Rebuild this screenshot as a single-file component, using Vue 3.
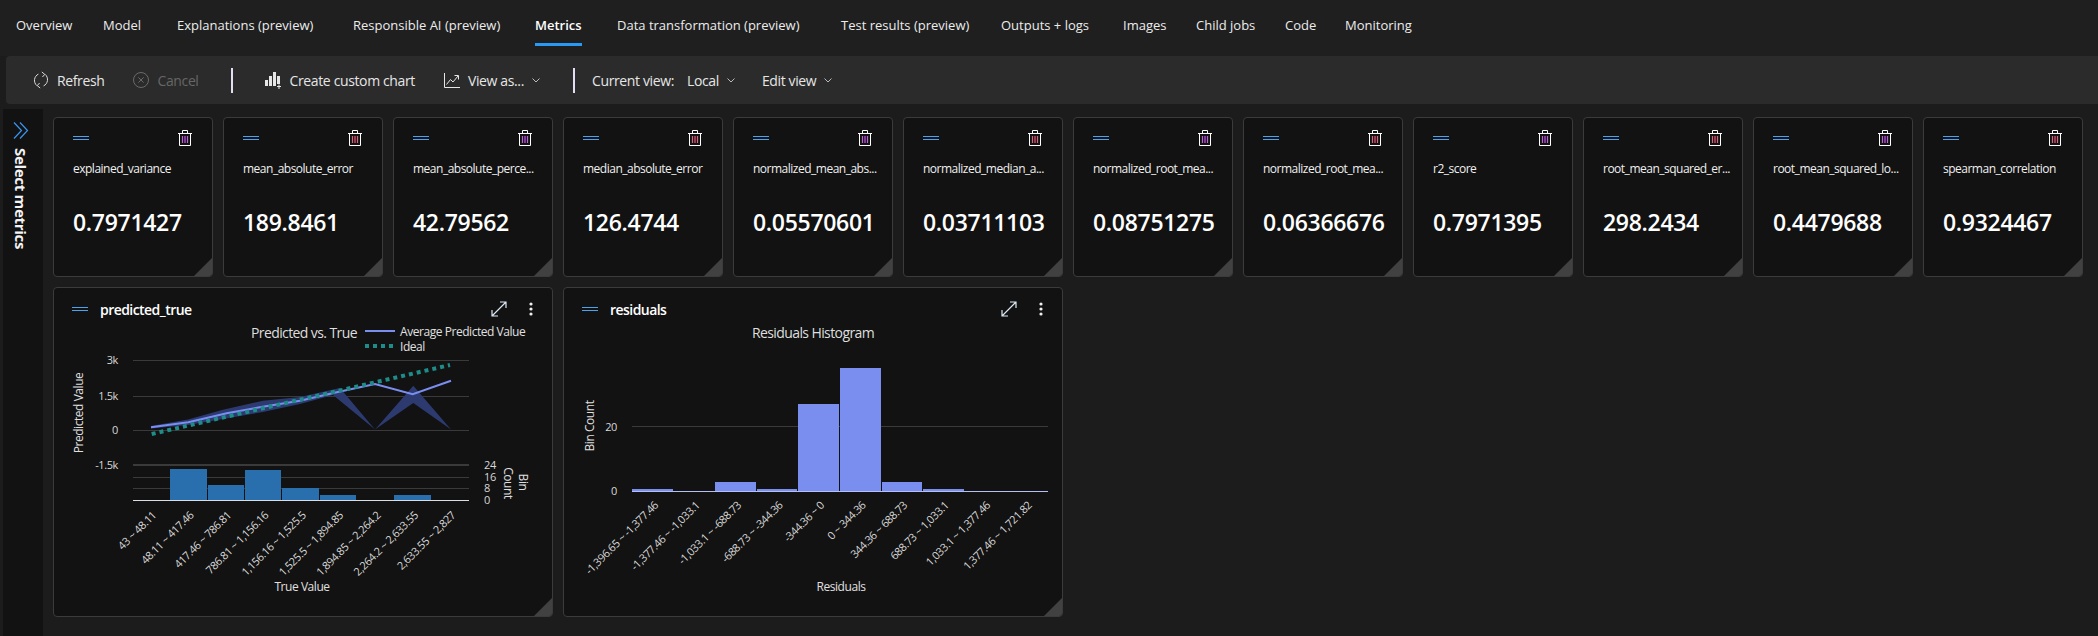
<template>
  <div class="page">
    <nav class="tabs">
      <div v-for="t in tabs" :key="t" class="tab">
        <a :class="{ active: t === 'Metrics' }">{{ t }}</a>
      </div>
    </nav>

    <div class="toolbar">
      <span class="tool refresh">
        <svg width="16" height="18" viewBox="0 0 16 18" fill="none" stroke="#dcdcdc" stroke-width="1"><path d="M5.4 3.1A7 7 0 0 0 3.8 14.6M10.6 14.9A7 7 0 0 0 12.2 3.4" /><path d="M8.8 1 11.8 3.4 9.4 6M7.2 17 4.2 14.6 6.6 12" /></svg>
        Refresh
      </span>
      <span class="tool cancel">
        <svg width="16" height="16" viewBox="0 0 16 16" fill="none" stroke="#6a6a6a" stroke-width="1"><circle cx="8" cy="8" r="7.5" /><path d="M5.4 5.4 10.6 10.6M10.6 5.4 5.4 10.6" /></svg>
        Cancel
      </span>
      <i class="sep first"></i>
      <span class="tool create">
        <svg width="17" height="17" viewBox="0 0 17 17" fill="#e6e6e6"><rect x="0" y="8" width="3" height="6" /><rect x="4" y="4" width="3" height="10" /><rect x="8" y="0" width="3" height="14" /><rect x="12" y="4" width="3" height="8" /><path d="M12 14h1.5v-1.5h1V14H16v1h-1.5v2h-1v-2H12z" /></svg>
        Create custom chart
      </span>
      <span class="tool view">
        <svg width="16" height="15" viewBox="0 0 16 15" fill="none" stroke="#e6e6e6" stroke-width="1"><path d="M.5 0V14.5H16" /><path d="M2.5 11.5 6.5 6.5 9 9 14 3M10.5 2.5H14.5V6.5" /></svg>
        View as...
        <svg class="chev" width="8" height="5" viewBox="0 0 8 5" fill="none" stroke="#bbb"><path d="M.5.5 4 4 7.5.5" /></svg>
      </span>
      <i class="sep second"></i>
      <span class="current">Current view:</span>
      <span class="tool local">Local
        <svg class="chev" width="8" height="5" viewBox="0 0 8 5" fill="none" stroke="#bbb"><path d="M.5.5 4 4 7.5.5" /></svg>
      </span>
      <span class="tool edit">Edit view
        <svg class="chev" width="8" height="5" viewBox="0 0 8 5" fill="none" stroke="#bbb"><path d="M.5.5 4 4 7.5.5" /></svg>
      </span>
    </div>

    <div class="body">
      <aside class="side">
        <svg width="16" height="17" viewBox="0 0 16 17" fill="none" stroke="#3a96f0" stroke-width="1.2"><path d="M1 .5 8.5 8.5 1 16.5M7 .5 14.5 8.5 7 16.5" /></svg>
        <span class="side-label">Select metrics</span>
      </aside>

      <main class="grid">
        <section v-for="m in metrics" :key="m.value" class="card metric">
          <div class="metric-head">
            <span class="drag"></span>
            <svg class="trash" width="14" height="16" viewBox="0 0 14 16" fill="none" stroke="#fff"><path d="M0 3.5H14M4.5 3V.5H9.5V3M1.5 3.5V15.5H12.5V3.5" /><path d="M4.5 6V13M7 6V13M9.5 6V13" :stroke="m.tint" stroke-width="1.2" /></svg>
          </div>
          <div class="metric-name">{{ m.name }}</div>
          <div class="metric-value">{{ m.value }}</div>
        </section>

        <section class="card chart">
          <div class="chart-head">
            <span class="drag"></span>
            <span class="chart-name">predicted_true</span>
            <svg class="expand" width="16" height="16" viewBox="0 0 16 16" fill="none" stroke="#dce9f5" stroke-width="1.2"><path d="M1.5 14.5 14.5 1.5M9 1H15V7M1 9V15H7" /></svg>
            <svg class="dots" width="4" height="14" viewBox="0 0 4 14" fill="#eee"><circle cx="2" cy="2" r="1.6" /><circle cx="2" cy="7" r="1.6" /><circle cx="2" cy="12" r="1.6" /></svg>
          </div>
          <svg class="plot" width="498" height="296" viewBox="54 320 498 296">
            <text class="title" x="251" y="339">Predicted vs. True</text>
            <line x1="365" y1="332" x2="395" y2="332" stroke="#7a8ef0" stroke-width="2" />
            <text class="lbl" x="400" y="336.5">Average Predicted Value</text>
            <line x1="365" y1="347" x2="395" y2="347" stroke="#1e8c88" stroke-width="4" stroke-dasharray="4 4" />
            <text class="lbl" x="400" y="351.5">Ideal</text>

            <line v-for="y in [361.5, 397.5, 431.5]" :key="y" x1="133" :y1="y" x2="469" :y2="y" stroke="#3a3a3a" />
            <line x1="133" y1="466" x2="469" y2="466" stroke="#3a3a3a" stroke-width="2" />
            <line v-for="y in [478.5, 489.5]" :key="y" x1="133" :y1="y" x2="469" :y2="y" stroke="#3a3a3a" />
            <text v-for="t in predTicks" :key="t.label" class="tick" x="118" :y="t.y" text-anchor="end">{{ t.label }}</text>
            <text class="lbl" transform="translate(83 414) rotate(-90)" text-anchor="middle">Predicted Value</text>

            <polygon points="151,427 188,420.5 223,410.7 263,401.7 300,398 340,389 375,430.5 413.3,386.7 451,430.5 413.3,404 375,430.5 333,396 300,405 263,413 223,420 188,426 151,429.5" fill="#2c3a70" />
            <polyline points="151,428.3 188.3,423.3 226.7,414.3 262.7,407.7 300,401.7 336.7,393.3 375,385 412.7,395.3 451,381.7" fill="none" stroke="#7a8ef0" stroke-width="2" />
            <line x1="151.7" y1="435" x2="450" y2="366" stroke="#1e8c88" stroke-width="4" stroke-dasharray="4 4" />

            <rect v-for="b in predBars" :key="b.x" :x="b.x" :y="b.y" :width="b.w" :height="501 - b.y" fill="#2a6fad" />
            <line x1="133" y1="501.5" x2="469" y2="501.5" stroke="#d8dde6" />
            <text v-for="t in binTicks" :key="t.label" class="tick" x="484" :y="t.y">{{ t.label }}</text>
            <text class="lbl" transform="translate(519 483) rotate(90)" text-anchor="middle">Bin</text>
            <text class="lbl" transform="translate(504 484) rotate(90)" text-anchor="middle">Count</text>
            <text v-for="(l, i) in predLabels" :key="l" class="tick" text-anchor="end" :transform="`translate(${157 + 37.4 * i} 517) rotate(-45)`">{{ l }}</text>
            <text class="lbl" x="302" y="592" text-anchor="middle">True Value</text>
          </svg>
        </section>

        <section class="card chart">
          <div class="chart-head">
            <span class="drag"></span>
            <span class="chart-name">residuals</span>
            <svg class="expand" width="16" height="16" viewBox="0 0 16 16" fill="none" stroke="#dce9f5" stroke-width="1.2"><path d="M1.5 14.5 14.5 1.5M9 1H15V7M1 9V15H7" /></svg>
            <svg class="dots" width="4" height="14" viewBox="0 0 4 14" fill="#eee"><circle cx="2" cy="2" r="1.6" /><circle cx="2" cy="7" r="1.6" /><circle cx="2" cy="12" r="1.6" /></svg>
          </div>
          <svg class="plot" width="498" height="296" viewBox="564 320 498 296">
            <text class="title" x="813" y="339" text-anchor="middle">Residuals Histogram</text>
            <line x1="632" y1="427.5" x2="1048" y2="427.5" stroke="#3a3a3a" />
            <text class="tick" x="617" y="431.5" text-anchor="end">20</text>
            <text class="tick" x="617" y="495.5" text-anchor="end">0</text>
            <text class="lbl" transform="translate(594 427) rotate(-90)" text-anchor="middle">Bin Count</text>
            <rect v-for="b in resBars" :key="b.x" :x="b.x" :y="b.y" :width="b.w" :height="492 - b.y" fill="#7a8ef0" />
            <line x1="632" y1="492.5" x2="1048" y2="492.5" stroke="#b4c0f4" />
            <text v-for="(l, i) in resLabels" :key="l" class="tick" text-anchor="end" :transform="`translate(${659 + 41.5 * i} 507) rotate(-45)`">{{ l }}</text>
            <text class="lbl" x="841" y="592" text-anchor="middle">Residuals</text>
          </svg>
        </section>
      </main>
    </div>
  </div>
</template>

<script setup>
const tabs = [
  'Overview', 'Model', 'Explanations (preview)', 'Responsible AI (preview)', 'Metrics',
  'Data transformation (preview)', 'Test results (preview)', 'Outputs + logs', 'Images',
  'Child jobs', 'Code', 'Monitoring'
]

const purple = '#c060e0'
const pink = '#e0607f'
const metrics = [
  { name: 'explained_variance', value: '0.7971427', tint: purple },
  { name: 'mean_absolute_error', value: '189.8461', tint: pink },
  { name: 'mean_absolute_perce...', value: '42.79562', tint: purple },
  { name: 'median_absolute_error', value: '126.4744', tint: pink },
  { name: 'normalized_mean_abs...', value: '0.05570601', tint: purple },
  { name: 'normalized_median_a...', value: '0.03711103', tint: pink },
  { name: 'normalized_root_mea...', value: '0.08751275', tint: purple },
  { name: 'normalized_root_mea...', value: '0.06366676', tint: pink },
  { name: 'r2_score', value: '0.7971395', tint: purple },
  { name: 'root_mean_squared_er...', value: '298.2434', tint: pink },
  { name: 'root_mean_squared_lo...', value: '0.4479688', tint: purple },
  { name: 'spearman_correlation', value: '0.9324467', tint: pink }
]

const predTicks = [
  { label: '3k', y: 365 },
  { label: '1.5k', y: 401 },
  { label: '0', y: 435 },
  { label: '-1.5k', y: 470 }
]
const binTicks = [
  { label: '24', y: 469.5 },
  { label: '16', y: 481.5 },
  { label: '8', y: 493 },
  { label: '0', y: 505 }
]
const predBars = [
  { x: 170, y: 470, w: 37 },
  { x: 208, y: 486, w: 36 },
  { x: 245, y: 471, w: 36 },
  { x: 282, y: 489, w: 37 },
  { x: 320, y: 496, w: 36 },
  { x: 394, y: 496, w: 37 }
]
const predLabels = [
  '43 ~ 48.11', '48.11 ~ 417.46', '417.46 ~ 786.81', '786.81 ~ 1,156.16', '1,156.16 ~ 1,525.5',
  '1,525.5 ~ 1,894.85', '1,894.85 ~ 2,264.2', '2,264.2 ~ 2,633.55', '2,633.55 ~ 2,827'
]
const resBars = [
  { x: 632, y: 490, w: 41 },
  { x: 715, y: 483, w: 41 },
  { x: 757, y: 490, w: 40 },
  { x: 798, y: 405, w: 41 },
  { x: 840, y: 369, w: 41 },
  { x: 882, y: 483, w: 40 },
  { x: 923, y: 490, w: 41 }
]
const resLabels = [
  '-1,396.65 ~ -1,377.46', '-1,377.46 ~ -1,033.1', '-1,033.1 ~ -688.73', '-688.73 ~ -344.36', '-344.36 ~ 0',
  '0 ~ 344.36', '344.36 ~ 688.73', '688.73 ~ 1,033.1', '1,033.1 ~ 1,377.46', '1,377.46 ~ 1,721.82'
]
</script>

<style>
html, body {
  margin: 0;
  background: #1c1c1c;
}
</style>

<style scoped>
.page {
  width: 2098px;
  height: 636px;
  overflow: hidden;
  display: flex;
  flex-direction: column;
  background: #1c1c1c;
  color: #f0f0f0;
  font-family: "Open Sans", "Noto Sans", sans-serif;
  font-size: 13px;
}
.tabs {
  height: 56px;
  box-sizing: border-box;
  padding-left: 16px;
  display: grid;
  grid-template-columns: 87px 74px 176px 182px 82px 224px 160px 122px 73px 89px 60px auto;
  justify-content: start;
  background: #1f1f1f;
  flex: none;
}
.tab a {
  display: inline-block;
  height: 46px;
  box-sizing: border-box;
  padding-top: 16px;
  line-height: 19px;
  color: #ececec;
  white-space: nowrap;
}
.tab a.active {
  font-weight: 600;
  color: #fff;
  border-bottom: 3px solid #2899f5;
}
.toolbar {
  height: 48px;
  margin-left: 6px;
  padding-left: 27px;
  display: flex;
  align-items: center;
  flex: none;
  background: #2b2b2b;
  border-radius: 4px 0 0 4px;
  color: #e6e6e6;
  font-size: 14px;
  letter-spacing: -0.37px;
}
.tool {
  display: flex;
  align-items: center;
  gap: 8px;
  white-space: nowrap;
}
.cancel {
  margin-left: 29px;
  color: #666;
}
.sep {
  width: 2px;
  height: 25px;
  background: #e4def4;
}
.sep.first {
  margin-left: 32px;
}
.create {
  margin-left: 32px;
}
.view {
  margin-left: 29px;
}
.sep.second {
  margin-left: 33px;
}
.current {
  margin-left: 17px;
  margin-right: 13px;
}
.edit {
  margin-left: 27px;
}
.body {
  flex: 1;
  display: flex;
  margin-top: 5px;
  padding-left: 3px;
  min-height: 0;
}
.side {
  width: 40px;
  flex: none;
  box-sizing: border-box;
  padding: 13px 0 0 10px;
  background: #121212;
}
.side svg {
  display: block;
  margin-bottom: 9px;
}
.side-label {
  display: block;
  writing-mode: vertical-rl;
  font-size: 15px;
  font-weight: 700;
  line-height: 16px;
  letter-spacing: -0.3px;
  color: #f4f4f4;
}
.grid {
  padding: 8px 10px;
  display: grid;
  grid-template-columns: repeat(12, 160px);
  grid-auto-rows: 160px;
  gap: 10px;
  align-content: start;
}
.card {
  position: relative;
  box-sizing: border-box;
  background: #121212;
  border: 1px solid #3b3b3b;
  border-radius: 4px;
  overflow: hidden;
}
.card::after {
  content: "";
  position: absolute;
  right: 0;
  bottom: 0;
  width: 18px;
  height: 18px;
  background: #414141;
  clip-path: polygon(100% 0, 100% 100%, 0 100%);
}
.metric {
  padding: 12px 20px 0 19px;
}
.metric-head {
  height: 16px;
  display: flex;
  align-items: center;
  justify-content: space-between;
}
.drag {
  display: block;
  width: 16px;
  height: 4px;
  box-sizing: border-box;
  border-top: 1px solid #4aa3f0;
  border-bottom: 1px solid #4aa3f0;
  flex: none;
}
.metric-name {
  margin-top: 15px;
  font-size: 12px;
  line-height: 16px;
  letter-spacing: -0.5px;
  color: #f0f0f0;
  white-space: nowrap;
}
.metric-value {
  margin-top: 29px;
  font-size: 23px;
  font-weight: 600;
  line-height: 32px;
  color: #fff;
  letter-spacing: -0.3px;
  white-space: nowrap;
}
.chart {
  grid-column: span 3;
  grid-row: span 2;
}
.chart-head {
  height: 20px;
  padding: 11px 19px 0 18px;
  display: flex;
  align-items: center;
}
.chart-name {
  margin-left: 12px;
  font-size: 14px;
  font-weight: 600;
  letter-spacing: -0.55px;
  color: #fff;
}
.expand {
  margin-left: auto;
}
.dots {
  margin-left: 22px;
}
.plot {
  display: block;
}
.plot text {
  fill: #d8d8d8;
  font-size: 11px;
  letter-spacing: -0.4px;
}
.plot .title {
  font-size: 14px;
  letter-spacing: -0.6px;
  fill: #dedede;
}
.plot .lbl {
  font-size: 12px;
  letter-spacing: -0.45px;
  fill: #e0e0e0;
}
</style>
